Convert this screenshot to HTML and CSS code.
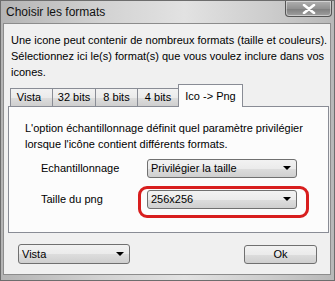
FILE: index.html
```html
<!DOCTYPE html>
<html>
<head>
  <title>Choisir les formats</title>
  <link rel="stylesheet" href="styles.css">
</head>
<body>
  <div class="window">
    <div class="titlebar">
      <span class="title">Choisir les formats</span>
      <span class="close">
        <svg width="14" height="10" viewBox="0 0 14 10">
          <path d="M2 1 L12 9 M12 1 L2 9" stroke="#fff" stroke-width="2.6" stroke-linecap="round"/>
        </svg>
      </span>
    </div>

    <div class="client">
      <p class="intro">Une icone peut contenir de nombreux formats (taille et couleurs).<br>
        Sélectionnez ici le(s) format(s) que vous voulez inclure dans vos<br>
        icones.</p>

      <div class="tabs">
        <span class="tab t-vista">Vista</span>
        <span class="tab t-32">32 bits</span>
        <span class="tab t-8">8 bits</span>
        <span class="tab t-4">4 bits</span>
        <span class="tab active">Ico -&gt; Png</span>
      </div>

      <div class="panel">
        <p class="panel-text">L'option échantillonnage définit quel paramètre privilégier<br>
          lorsque l'icône contient différents formats.</p>

        <div class="row">
          <span class="label">Echantillonnage</span>
          <div class="combo wide"><span>Privilégier la taille</span><i class="arrow"></i></div>
        </div>
        <div class="row second">
          <span class="label">Taille du png</span>
          <div class="highlight">
            <div class="combo wide"><span>256x256</span><i class="arrow"></i></div>
          </div>
        </div>
      </div>

      <div class="footer">
        <div class="combo small"><span>Vista</span><i class="arrow"></i></div>
        <button class="btn">Ok</button>
      </div>
    </div>
  </div>
</body>
</html>
```

FILE: styles.css
```css
body {
  margin: 0;
  font-family: "Liberation Sans", Arial, sans-serif;
  font-size: 11px;
  color: #000;
}

.window {
  width: 335px;
  height: 281px;
  box-sizing: border-box;
  padding: 0 3px 5px 2px;
  display: flex;
  flex-direction: column;
  background: linear-gradient(90deg, #b4b4b4 0%, #d2d2d2 30%, #e2e2e2 55%, #cdcdcd 80%, #b8b8b8 100%);
  border: 1px solid #6d6d6d;
}

.titlebar {
  height: 22px;
  flex: none;
  display: flex;
  justify-content: space-between;
  align-items: flex-start;
}

.title {
  font-size: 12px;
  margin: 4px 0 0 3px;
  color: #111;
}

.close {
  width: 45px;
  height: 15px;
  margin-right: -1px;
  display: flex;
  align-items: center;
  justify-content: center;
  border: 1px solid #555;
  border-top: none;
  border-radius: 0 0 4px 4px;
  background: linear-gradient(#b0b0b0, #929292 50%, #7e7e7e 51%, #a0a0a0);
  box-shadow: inset 0 0 0 1px rgba(255, 255, 255, 0.45);
}

.client {
  flex: 1;
  background: #f0f0f0;
  border: 1px solid #8c8c8c;
  display: flex;
  flex-direction: column;
}

.intro {
  margin: 8px 0 0 7px;
  line-height: 16px;
  white-space: nowrap;
}

.tabs {
  display: flex;
  align-items: flex-end;
  margin: 4px 0 0 6px;
  height: 22px;
}

.tab {
  height: 18px;
  box-sizing: border-box;
  text-align: center;
  line-height: 17px;
  border: 1px solid #898c95;
  border-bottom: none;
  margin-right: -1px;
  background: linear-gradient(#f2f2f2, #ebebeb 50%, #dddddd 51%, #cfcfcf);
}

.t-vista { width: 43px; padding-right: 5px; }
.t-32 { width: 44px; }
.t-8 { width: 43px; }
.t-4 { width: 42px; }

.tab.active {
  width: 65px;
  height: 23px;
  margin-bottom: -1px;
  line-height: 22px;
  background: #fcfcfc;
  position: relative;
  z-index: 1;
}

.panel {
  margin: 0 1px 0 4px;
  height: 127px;
  box-sizing: border-box;
  background: #fcfcfc;
  border: 1px solid #898c95;
  padding: 13px 0 0 16px;
}

.panel-text {
  margin: 0;
  line-height: 16px;
  white-space: nowrap;
}

.row {
  display: flex;
  align-items: center;
  margin-top: 6px;
  height: 20px;
}

.row.second {
  margin-top: 11px;
}

.label {
  width: 122px;
  padding-left: 16px;
  box-sizing: border-box;
}

.combo {
  height: 19px;
  box-sizing: border-box;
  border: 1px solid #707070;
  border-radius: 3px;
  background: linear-gradient(#f2f2f2, #ebebeb 50%, #dddddd 51%, #cfcfcf);
  display: flex;
  align-items: center;
  justify-content: space-between;
  padding: 0 5px 0 3px;
}

.combo.wide {
  width: 150px;
}

.combo.small {
  width: 112px;
  height: 20px;
}

.arrow {
  width: 0;
  height: 0;
  border-left: 4px solid transparent;
  border-right: 4px solid transparent;
  border-top: 4px solid #000;
}

.highlight {
  margin: -4px 0 -9px -9px;
  padding: 1px 9px 6px 6px;
  border: 3px solid #d81e1e;
  border-radius: 9px;
}

.footer {
  display: flex;
  justify-content: space-between;
  align-items: center;
  margin: 11px 13px 0 14px;
}

.btn {
  width: 73px;
  height: 19px;
  font-family: inherit;
  font-size: 11px;
  border: 1px solid #707070;
  border-radius: 3px;
  background: linear-gradient(#f2f2f2, #ebebeb 50%, #dddddd 51%, #cfcfcf);
  padding: 0;
}
```
